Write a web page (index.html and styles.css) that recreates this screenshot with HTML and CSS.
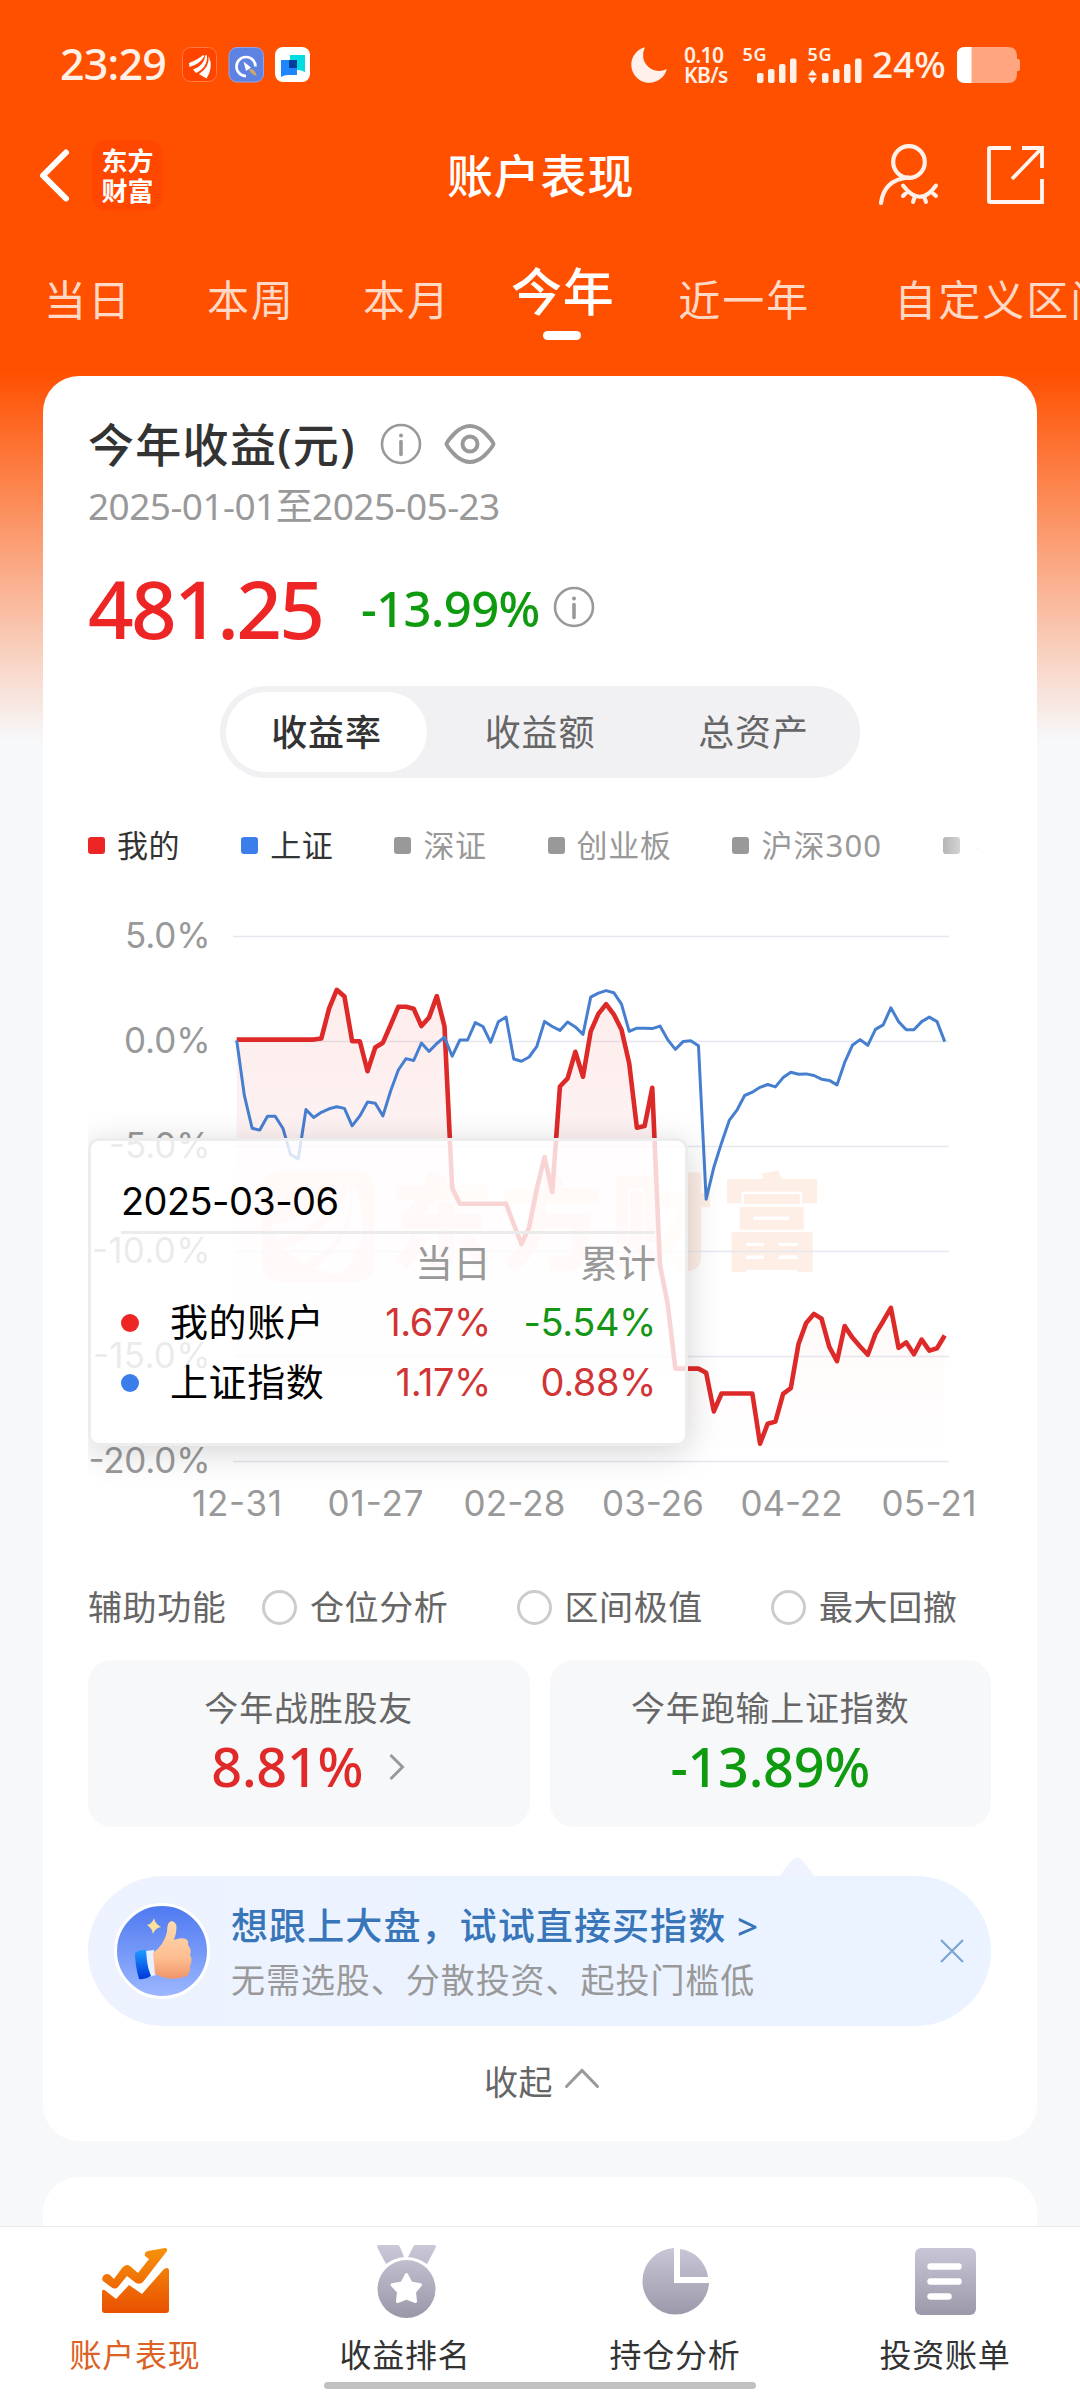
FILE: index.html
```html
<!DOCTYPE html>
<html lang="zh-CN">
<head>
<meta charset="utf-8">
<title>账户表现</title>
<link rel="stylesheet" href="styles.css">
</head>
<body>
<div class="page">
  <main class="main">
    <div class="status">
      <span class="clock">23:29</span>
      <svg class="apps" width="130" height="38" viewBox="181 46 130 38">
        <rect x="182.500" y="47.500" width="34" height="34" rx="8" fill="#ff4400" stroke="#ff7a45"/>
        <path d="M189 63Q199 59 203 55L204.500 56Q200 64 189.500 67ZM193 69.500Q204 66 205.500 55L207 55.500Q208 67 196 73ZM199 74Q210 67 208.500 56Q214 67 206.500 78.500Z" fill="#fff"/>
        <rect x="229" y="47.500" width="34.500" height="34.500" rx="8" fill="#5e82e2" stroke="#93a4ea"/>
        <path d="M246 76a9.500 9.500 0 1 1 9.500-9.500" fill="none" stroke="#fff" stroke-width="2.600"/>
        <path d="M243.500 61.500l7.500 6-5 3.500z" fill="#fff"/>
        <path d="M249 69q6-1 7.500 7-6.500-2-7.500-7z" fill="#cda66c"/>
        <rect x="275" y="47" width="35" height="35" rx="8" fill="#fff"/>
        <path d="M290 55h15v17q-4-2-7-2h-8z" fill="#00dce0"/>
        <path d="M281 60h16v15h-9q-4 0-7 2z" fill="#1f86ff"/>
        <rect x="289" y="60" width="8" height="8" fill="#003f9a"/>
      </svg>
      <svg class="moon" width="38" height="38" viewBox="630 46 38 38"><path d="M645 47.300A18 18 0 1 0 666.800 69A16 16 0 0 1 645 47.300Z" fill="#fff0eb"/></svg>
      <span class="speed"><b>0.10</b><b>KB/s</b></span>
      <svg class="signal" width="122" height="50" viewBox="742 40 122 50" fill="#fff0e8">
        <text x="742.500" y="61" textLength="24">5G</text>
        <rect x="757" y="73" width="6.500" height="10" rx="2"/><rect x="768" y="69" width="6.500" height="14" rx="2"/><rect x="779" y="64" width="6.500" height="19" rx="2"/><rect x="790" y="58.500" width="6.500" height="24.500" rx="2"/>
        <text x="807.500" y="61" textLength="24">5G</text>
        <path d="M812.500 69.500l4.500 6h-9zM812.500 83.500l4.500-6h-9z"/>
        <rect x="822" y="73" width="6.500" height="10" rx="2"/><rect x="833" y="69" width="6.500" height="14" rx="2"/><rect x="844" y="64" width="6.500" height="19" rx="2"/><rect x="855" y="58.500" width="6.500" height="24.500" rx="2"/>
      </svg>
      <span class="percent">24%</span>
      <svg class="battery" width="64" height="36" viewBox="957 47 64 36">
        <path d="M965 47h43q9 0 9 9v3h1.500q1.500 0 1.500 2v8q0 2-1.500 2H1017v3q0 9-9 9h-43q-8 0-8-8V55q0-8 8-8z" fill="#ffa680"/>
        <path d="M965 47h6.500v36H965q-8 0-8-8V55q0-8 8-8z" fill="#fff"/>
      </svg>
    </div>

    <header class="nav">
      <svg class="back" width="34" height="56" viewBox="38 147 34 56"><path d="M66 152.500L43 175.500 66 198.500" fill="none" stroke="#fff" stroke-width="6" stroke-linecap="round" stroke-linejoin="round"/></svg>
      <div class="brand"><span>东方</span><span>财富</span></div>
      <h1 class="nav-title">账户表现</h1>
      <svg class="person" width="64" height="66" viewBox="876 141 64 66" fill="none" stroke="#fff1ea" stroke-width="4.200" stroke-linecap="round">
        <circle cx="909" cy="161" r="15.800"/><path d="M881 202Q884 179 908 176.500"/><path d="M903 184.500Q920 207 936 184.500M907 191l-4 4M915 195l-2 6M924 195l2 6M931.500 191l4.500 4" stroke-width="4"/>
      </svg>
      <svg class="share" width="60" height="60" viewBox="986 144 60 60" fill="none" stroke="#fff6f1" stroke-width="3.800">
        <path d="M1011 147H990Q989 147 989 148V200Q989 201 990 201H1042V178M1022 147H1042V167M1041 148L1012 178"/>
      </svg>
    </header>

    <nav class="ranges">
      <span class="range r1">当日</span><span class="range r2">本周</span><span class="range r3">本月</span><span class="range active">今年</span><span class="range r5">近一年</span><span class="range r6">自定义区间</span>
    </nav>

    <section class="card">
      <div class="title-row">
        <h2>今年收益(元)</h2>
        <svg class="info" width="42" height="42" viewBox="0 0 42 42"><circle cx="21" cy="21" r="19" fill="none" stroke="#999" stroke-width="2.600"/><circle cx="21" cy="12.500" r="2" fill="#999"/><path d="M21 18.500v13" stroke="#999" stroke-width="3.600" stroke-linecap="round"/></svg>
        <svg class="eye" width="54" height="42" viewBox="0 0 54 42" fill="none" stroke="#999" stroke-width="4"><path d="M3.500 21Q4 18 13 9Q27-3 41 9Q50 18 50.500 21Q50 24 41 33Q27 45 13 33Q4 24 3.500 21Z"/><circle cx="27" cy="21" r="7.500"/></svg>
      </div>
      <div class="period">2025-01-01至2025-05-23</div>
      <div class="value-row">
        <span class="amount">481.25</span>
        <span class="rate">-13.99%</span>
        <svg class="info2" width="42" height="42" viewBox="0 0 42 42"><circle cx="21" cy="21" r="19" fill="none" stroke="#999" stroke-width="2.600"/><circle cx="21" cy="12.500" r="2" fill="#999"/><path d="M21 18.500v13" stroke="#999" stroke-width="3.600" stroke-linecap="round"/></svg>
      </div>

      <div class="segment"><span class="seg on">收益率</span><span class="seg">收益额</span><span class="seg">总资产</span></div>

      <div class="legend">
        <span class="key red">我的</span><span class="key blue">上证</span><span class="key off">深证</span><span class="key off">创业板</span><span class="key off">沪深300</span><span class="key more">…</span>
      </div>

      <div class="chart">
        <svg width="903" height="630" viewBox="88 900 903 630">
          <defs>
            <linearGradient id="area" x1="0" y1="990" x2="0" y2="1461" gradientUnits="userSpaceOnUse"><stop offset="0" stop-color="#ee2222" stop-opacity=".085"/><stop offset="1" stop-color="#ee2222" stop-opacity="0"/></linearGradient>
          </defs>
          <g class="mark">
            <path fill-rule="evenodd" d="M282 1171h73q20 0 20 20v71q0 20-20 20h-73q-20 0-20-20v-71q0-20 20-20zM270 1226Q322 1213 344 1181Q324 1229 280 1240ZM283 1249Q339 1227 349 1183Q359 1237 303 1263ZM314 1268Q358 1237 351 1181Q380 1229 340 1276Z"/>
            <text x="389" y="1262" textLength="435">东方财富</text>
          </g>
          <path class="gridline" d="M233 936.500H949M233 1041.500H949M233 1146.500H949M233 1251.500H949M233 1356.500H949M233 1461.500H949"/>
          <g transform="translate(236.700 0) scale(7.696 1)">
            <path fill="url(#area)" d="M0 1461V1040L10 1040 11 1038 12 1009 13 990 14 996 15 1041 16 1041 17 1071 18 1047 19 1043 20 1025 21 1007 22 1007 23 1009 24 1026 25 1017 26 996 27 1026 28 1188 29 1204 35 1204 36 1224 37 1244 38 1227 39 1189 40 1157 41 1192 42 1086 43 1078 44 1052 45 1077 46 1031 47 1014 48 1004 49 1014 50 1030 51 1063 52 1128 53 1126 54 1088 55 1265 56 1304 57 1369 60 1369 61 1373 62 1411 63 1393 67 1393 68 1444 69 1424 70 1422 71 1394 72 1388 73 1344 74 1323 75 1314 76 1319 77 1347 78 1361 79 1326 80 1338 81 1346 82 1355 83 1334 84 1321 85 1308 86 1348 87 1342 88 1354 89 1340 90 1351 91 1348 92 1335V1461Z"/>
            <polyline class="line mine" points="0,1039.600 10,1039.600 11,1038.400 12,1008.700 13,989.800 14,996.500 15,1041.200 16,1041.200 17,1071.200 18,1047.500 19,1042.700 20,1025 21,1006.800 22,1006.800 23,1008.700 24,1026.100 25,1017.400 26,996.100 27,1026.500 28,1187.900 29,1203.700 35,1203.700 36,1224.200 37,1244 38,1227.400 39,1188.700 40,1157 41,1192 42,1086.500 43,1078.400 44,1051.800 45,1076.700 46,1031.400 47,1013.900 48,1004.100 49,1014.300 50,1029.800 51,1063.300 52,1127.800 53,1126.100 54,1087.800 55,1265.300 56,1304 57,1368.600 60,1368.600 61,1372.700 62,1411.400 63,1393.500 67,1393.500 68,1443.700 69,1423.700 70,1421.600 71,1393.900 72,1388.200 73,1344 74,1322.900 75,1313.900 76,1318.800 77,1346.900 78,1361.200 79,1326.100 80,1337.600 81,1346.500 82,1354.700 83,1333.900 84,1321.200 85,1307.800 86,1347.800 87,1342.400 88,1354.300 89,1339.600 90,1350.600 91,1348.200 92,1335.500"/>
            <polyline class="line index" points="0,1040.400 1,1095.700 2,1128.200 3,1130.100 4,1116.300 5,1116.300 6,1128.200 7,1154.600 8,1159 9,1109.600 10,1117.500 11,1112.300 12,1108.800 13,1106.800 14,1108.400 15,1125.800 16,1115.900 17,1102.100 18,1103.200 19,1115.900 20,1091 21,1070 22,1058.600 23,1060.500 24,1043.100 25,1051.400 26,1043.500 27,1037.200 28,1056.200 29,1040 30,1040 31,1022.600 32,1026.500 33,1042.300 34,1021.800 35,1017 36,1059 37,1061.300 38,1057 39,1046.300 40,1021.400 41,1026.500 42,1030.400 43,1022 44,1026.900 45,1034.300 46,997.100 47,993.100 48,990.600 49,992.700 50,1004.100 51,1031.400 52,1028.200 53,1028.200 54,1028.600 55,1026.100 56,1039.600 57,1049.400 58,1041.600 59,1040.800 60,1045.700 61,1199.200 62,1167.300 63,1142.900 64,1120.400 65,1110.200 66,1095.500 67,1092.200 68,1087.300 69,1084.500 70,1086.900 71,1077.600 72,1072.200 73,1074.300 74,1073.900 75,1075.500 76,1079.200 77,1080.400 78,1084.900 79,1062.400 80,1045.300 81,1039.600 82,1045.300 83,1029.400 84,1024.900 85,1007.800 86,1021.600 87,1029.800 88,1029.800 89,1021.600 90,1017.100 91,1021.600 92,1041.600"/>
          </g>
          <g class="axis">
            <text x="125" y="947.500" textLength="85.500">5.0%</text><text x="124" y="1052.500" textLength="86.500">0.0%</text><text x="109" y="1157.500" textLength="101.500">-5.0%</text><text x="92" y="1263" textLength="118.500">-10.0%</text><text x="93" y="1368" textLength="117.500">-15.0%</text><text x="88.500" y="1473" textLength="122">-20.0%</text>
            <text x="192" y="1515.500" textLength="90">12-31</text><text x="327.500" y="1515.500" textLength="96">01-27</text><text x="463.500" y="1515.500" textLength="102">02-28</text><text x="602" y="1515.500" textLength="102">03-26</text><text x="740.500" y="1515.500" textLength="102">04-22</text><text x="881.500" y="1515.500" textLength="95">05-21</text>
          </g>
        </svg>
        <div class="tip">
          <div class="tip-date">2025-03-06</div>
          <div class="tip-row head"><span></span><span></span><span>当日</span><span>累计</span></div>
          <div class="tip-row"><i class="dot red-dot"></i><span class="name">我的账户</span><span class="up">1.67%</span><span class="down">-5.54%</span></div>
          <div class="tip-row"><i class="dot blue-dot"></i><span class="name">上证指数</span><span class="up">1.17%</span><span class="up">0.88%</span></div>
        </div>
      </div>

      <div class="aux">
        <span class="aux-title">辅助功能</span>
        <label class="opt"><i></i>仓位分析</label>
        <label class="opt"><i></i>区间极值</label>
        <label class="opt"><i></i>最大回撤</label>
      </div>

      <div class="stats">
        <div class="stat"><span class="stat-label">今年战胜股友</span><span class="stat-value rise">8.81%<svg width="18" height="28" viewBox="0 0 18 28"><path d="M2.500 2L14.500 14 2.500 26" fill="none" stroke="#999" stroke-width="3"/></svg></span></div>
        <div class="stat"><span class="stat-label">今年跑输上证指数</span><span class="stat-value fall">-13.89%</span></div>
      </div>

      <div class="banner">
        <svg class="caret" width="38" height="20" viewBox="0 0 38 20"><path d="M0 20Q3 18 6 13L13 4Q19-3 25 4L32 13Q35 18 38 20Z" fill="#eef3ff"/></svg>
        <svg class="thumb" width="96" height="96" viewBox="0 0 96 96">
          <defs>
            <linearGradient id="sky" x2="0" y2="1"><stop stop-color="#4d78f0"/><stop offset="1" stop-color="#9db8ff"/></linearGradient>
            <linearGradient id="skin" x2="0" y2="1"><stop stop-color="#ffdcae"/><stop offset=".65" stop-color="#fdbd90"/><stop offset="1" stop-color="#ef9468"/></linearGradient>
            <linearGradient id="cuff" x2="0" y2="1"><stop stop-color="#1e9bff"/><stop offset="1" stop-color="#0036dc"/></linearGradient>
          </defs>
          <circle cx="48" cy="48" r="46.500" fill="url(#sky)" stroke="#fff" stroke-width="3"/>
          <path d="M32 48L40 47 42 72 35 74Z" fill="#e9efff"/>
          <path d="M39 50Q50 42 53 29Q53 18 58 18Q64 19 62 30L60 37Q67 34 72 36Q75 38 74 42Q78 46 76 52Q79 57 76 63Q77 68 73 73Q60 78 48 74L41 71Z" fill="url(#skin)"/>
          <path d="M21 50Q26 46 32 47Q32 61 37 73Q31 77 25 76Q21 62 21 50Z" fill="url(#cuff)"/>
          <path d="M40 15Q41 21 47 24Q41 25 39 31Q38 25 33 22Q38 21 40 15Z" fill="#ffe29a"/>
        </svg>
        <div class="banner-text"><strong>想跟上大盘，试试直接买指数 &gt;</strong><span>无需选股、分散投资、起投门槛低</span></div>
        <svg class="close" width="26" height="26" viewBox="0 0 26 26"><path d="M2 2L24 24M24 2L2 24" stroke="#7ba5d2" stroke-width="2.200"/></svg>
      </div>

      <div class="collapse"><span>收起</span><svg width="36" height="22" viewBox="0 0 36 22"><path d="M2.500 19.500L18 3.500 33.500 19.500" fill="none" stroke="#999" stroke-width="3" stroke-linecap="round"/></svg></div>
    </section>
    <section class="card next"></section>
  </main>

  <footer class="tabbar">
    <svg width="0" height="0" class="defs"><defs>
      <linearGradient id="hot" gradientUnits="userSpaceOnUse" x1="0" y1="2248" x2="0" y2="2314"><stop stop-color="#f7920b"/><stop offset="1" stop-color="#e94f00"/></linearGradient>
      <linearGradient id="cool" gradientUnits="userSpaceOnUse" x1="0" y1="2246" x2="0" y2="2316"><stop stop-color="#c9c7d8"/><stop offset="1" stop-color="#9b99a9"/></linearGradient>
    </defs></svg>
    <a class="tab current"><svg width="80" height="80" viewBox="95 2241 80 80" fill="url(#hot)">
      <path d="M104 2275Q107 2273 110 2275L114 2279 122 2268Q126 2263 130 2266L138 2273 149 2259 145 2256Q144 2252 148 2251L165 2248Q168 2248 167 2251L143 2282Q140 2285 136 2283L127 2276 118 2287Q115 2290 111 2287L103 2281Q101 2278 104 2275Z"/>
      <path d="M102 2292Q102 2288 106 2291L116 2299 129 2285 142 2294 164 2269Q169 2266 169 2271V2310Q169 2313 166 2313H105Q102 2313 102 2310Z"/>
    </svg><span>账户表现</span></a>
    <a class="tab"><svg width="80" height="80" viewBox="365 2241 80 80" fill="url(#cool)">
      <path d="M379 2245H397Q399 2245 400 2247L404 2257Q394 2258 386 2264L377 2247Q377 2245 379 2245ZM415 2245H434Q436 2245 436 2247L427 2264Q419 2258 408 2257L413 2247Q414 2245 415 2245Z"/>
      <circle cx="406.500" cy="2289" r="29"/>
      <path d="M406.500 2274.500L411 2283 420.500 2284.800 414.500 2292 415.500 2301.500 406.500 2298 397.500 2301.500 398.500 2292 392 2284.800 402 2283Z" fill="#fff" stroke="#fff" stroke-width="3" stroke-linejoin="round"/>
    </svg><span>收益排名</span></a>
    <a class="tab"><svg width="80" height="80" viewBox="635 2241 80 80" fill="url(#cool)">
      <path d="M674 2248A33.300 33.300 0 1 0 709 2283H674ZM680 2249V2277H708A32 32 0 0 0 680 2249Z"/>
    </svg><span>持仓分析</span></a>
    <a class="tab"><svg width="80" height="80" viewBox="905 2241 80 80">
      <rect x="915" y="2248" width="61" height="67" rx="6" fill="url(#cool)"/><path d="M930.500 2266.500H958.500M930.500 2281.500H958.500M930.500 2296.500H948.500" stroke="#fff" stroke-width="6.500" stroke-linecap="round"/>
    </svg><span>投资账单</span></a>
    <i class="home"></i>
  </footer>
</div>
</body>
</html>
```
FILE: styles.css
```css
* { box-sizing: border-box; }
body { margin: 0; font-family: "Noto Sans", "Noto Sans CJK SC", sans-serif; color: #333; }
h1, h2 { margin: 0; font-weight: 500; }
svg { display: block; flex: none; }
span, a, strong, label { white-space: nowrap; }

.page { width: 1080px; height: 2392px; display: flex; flex-direction: column; overflow: hidden; background: #f7f8fa; }
.main { height: 2226px; flex: none; overflow: hidden; background: linear-gradient(180deg, #ff5000 0, #ff5000 372px, #f7f8fa 740px); }

.status { height: 130px; display: flex; align-items: center; padding-left: 60px; color: #fff0e8; }
.clock { width: 121px; font-size: 43px; line-height: 56px; margin-top: -2px; font-weight: 500; letter-spacing: -0.8px; }
.moon { margin-left: 319px; }
.speed { display: flex; flex-direction: column; width: 58px; margin-left: 16px; font-size: 21px; line-height: 20px; }
.speed b { font-weight: 600; letter-spacing: -0.6px; }
.signal text { font-size: 18px; font-weight: 600; }
.percent { width: 85px; padding-left: 8px; font-size: 37px; line-height: 50px; margin-top: -2px; font-weight: 500; }
.battery { margin-left: 8px; }

.nav { height: 90px; display: flex; align-items: center; padding-left: 38px; color: #fff; }
.brand { width: 71px; height: 71px; margin-left: 20px; border-radius: 15px; background: #ff4700; display: flex; flex-direction: column; align-items: center; justify-content: center; font-family: "Noto Sans CJK SC", sans-serif; font-size: 26px; font-weight: 700; line-height: 30px; }
.nav-title { margin-left: 284px; width: 192px; font-size: 46px; letter-spacing: 0.8px; line-height: 58px; white-space: nowrap; }
.person { margin-left: 237px; }
.share { margin-left: 46px; }

.ranges { height: 156px; display: flex; padding: 50px 0 0 44px; overflow: hidden; }
.range { flex: none; font-size: 42px; letter-spacing: 2px; line-height: 60px; color: #ffd9c6; }
.r2 { margin-left: 75px; }
.r3 { margin-left: 68px; }
.range.active { position: relative; height: 70px; margin: -9px 0 0 60px; font-size: 51px; letter-spacing: 0.6px; font-weight: 500; color: #fff; }
.range.active::after { content: ""; position: absolute; left: 32px; top: 70px; width: 38px; height: 9px; border-radius: 5px; background: #fff; }
.r5 { margin-left: 64px; }
.r6 { margin-left: 84px; }

.card { width: 994px; height: 1765px; margin: 0 auto; padding: 38px 46px 0 45px; border-radius: 36px; background: #fff; }
.card.next { height: 200px; margin-top: 36px; }

.title-row { height: 60px; display: flex; align-items: center; }
.title-row h2 { width: 292px; font-size: 46px; letter-spacing: 1.3px; line-height: 60px; white-space: nowrap; }
.eye { margin-left: 21px; }
.period { height: 52px; margin-top: 6px; line-height: 51px; font-size: 37px; letter-spacing: -0.55px; color: #999; }
.value-row { height: 100px; margin-top: 28px; display: flex; align-items: center; }
.amount { width: 273px; height: 100px; line-height: 95px; font-size: 80px; font-weight: 500; letter-spacing: -2.7px; color: #ee2525; }
.rate { width: 192px; height: 100px; line-height: 97px; font-size: 49px; font-weight: 500; letter-spacing: -0.6px; color: #0f9b0f; }
.info2 { margin-top: -6px; }

.segment { width: 640px; height: 92px; margin: 26px 0 0 132px; padding: 6px; border-radius: 46px; background: #f1f1f4; display: flex; justify-content: space-between; }
.seg { width: 201px; height: 80px; line-height: 82px; border-radius: 40px; text-align: center; font-size: 36px; letter-spacing: 0.8px; color: #666; }
.seg.on { background: #fff; color: #333; font-weight: 500; }

.legend { width: 890px; height: 48px; margin-top: 43px; display: flex; gap: 61px; overflow: hidden; }
.key { flex: none; display: flex; align-items: center; gap: 12px; font-size: 31px; letter-spacing: 0.6px; line-height: 48px; color: #333; }
.key::before { content: ""; width: 17px; height: 17px; border-radius: 3px; background: #999; }
.red::before { background: #ee2525; }
.blue::before { background: #3b7eea; }
.off { color: #999; }
.off:nth-child(5) { letter-spacing: 1.1px; }
.more { color: #e8e8e8; font-size: 10px; gap: 16px; letter-spacing: 0; }
.more::before { background: linear-gradient(90deg, #b5b5b5, #d4d4d4); }

.chart { position: relative; height: 630px; margin-top: 31px; overflow: hidden; }
.mark { fill: #fdeee6; }
.mark text { font-family: "Noto Sans CJK SC", sans-serif; font-size: 104px; font-weight: 900; }
.gridline { fill: none; stroke: #e6e8ef; stroke-width: 1.5; }
.line { fill: none; vector-effect: non-scaling-stroke; stroke-linejoin: round; }
.mine { stroke: #de2929; stroke-width: 4.6px; }
.index { stroke: #467fd0; stroke-width: 3px; }
.axis text { font-family: Inter, sans-serif; font-size: 35px; fill: #999; }

.tip { position: absolute; left: 0; top: 238px; width: 600px; height: 308px; padding: 31px 30px 0; border: 3px solid #ededed; border-radius: 11px; background: rgba(255,255,255,.8); background-clip: padding-box; box-shadow: 0 6px 34px rgba(0,0,0,.17); font-family: Inter, "Noto Sans CJK SC", sans-serif; font-size: 38px; color: #000; }
.tip-date { height: 62px; line-height: 58px; border-bottom: 3px solid #ebebeb; letter-spacing: -0.6px; }
.tip-row { display: grid; grid-template-columns: 49px 161px 160px 165px; align-items: center; height: 60px; line-height: 61px; }
.tip-row > span + span { text-align: right; }
.tip-row > .name { text-align: left; letter-spacing: 0.6px; }
.tip-row.head { color: #999; height: 58px; line-height: 58px; }
.dot { width: 18px; height: 18px; border-radius: 50%; }
.red-dot { background: #ee2525; }
.blue-dot { background: #3b7eea; }
.up { color: #d03434; letter-spacing: -0.4px; }
.down { color: #159515; letter-spacing: -0.4px; }

.aux { height: 60px; margin-top: 47px; display: flex; align-items: center; font-size: 34px; letter-spacing: 0.6px; line-height: 60px; color: #666; }
.aux-title { flex: none; width: 174px; }
.opt { width: 254.5px; flex: none; display: flex; align-items: center; gap: 13px; }
.opt:last-child { width: 206px; }
.opt i { width: 35px; height: 35px; border: 3px solid #ccc; border-radius: 50%; flex: none; }

.stats { height: 167px; margin-top: 23px; display: flex; gap: 20px; }
.stat { flex: 1; display: flex; flex-direction: column; align-items: center; padding-top: 24px; border-radius: 24px; background: #f7f8fa; }
.stat-label { height: 48px; line-height: 48px; font-size: 34px; letter-spacing: 0.8px; color: #666; }
.stat-value { display: flex; align-items: center; gap: 25px; height: 68px; line-height: 68px; font-size: 54px; font-weight: 500; letter-spacing: -0.3px; }
.stat-value svg { margin-top: 2px; }
.rise { color: #e02a2a; }
.fall { color: #0f9b0f; }

.banner { position: relative; height: 150px; margin-top: 49px; padding-left: 26px; border-radius: 75px; background: linear-gradient(90deg, #eef2ff, #eaf3ff 60%); display: flex; align-items: center; }
.caret { position: absolute; left: 690px; top: -19px; }
.banner-text { width: 709px; padding: 4px 0 0 21px; display: flex; flex-direction: column; }
.banner-text strong { height: 55px; line-height: 55px; font-size: 37px; font-weight: 500; letter-spacing: 1.1px; color: #3876b9; }
.banner-text span { height: 55px; line-height: 55px; font-size: 34px; letter-spacing: 0.95px; color: #999; }
.close { margin-left: 20px; }

.collapse { height: 60px; margin-top: 24px; display: flex; align-items: center; padding-left: 396px; gap: 11px; font-size: 34px; letter-spacing: 0.6px; color: #666; }
.collapse svg { margin-top: -4px; }

.tabbar { position: relative; height: 166px; flex: none; border-top: 1.5px solid #ebebeb; background: #fff; display: flex; }
.defs { position: absolute; }
.tab { width: 270px; display: flex; flex-direction: column; align-items: center; padding-top: 14px; font-size: 32px; letter-spacing: 0.8px; line-height: 48px; color: #333; }
.tab span { margin-top: 10px; }
.current { color: #db6224; }
.home { position: absolute; left: 324px; top: 155px; width: 432px; height: 7px; border-radius: 4px; background: #c1c1c1; }
```
